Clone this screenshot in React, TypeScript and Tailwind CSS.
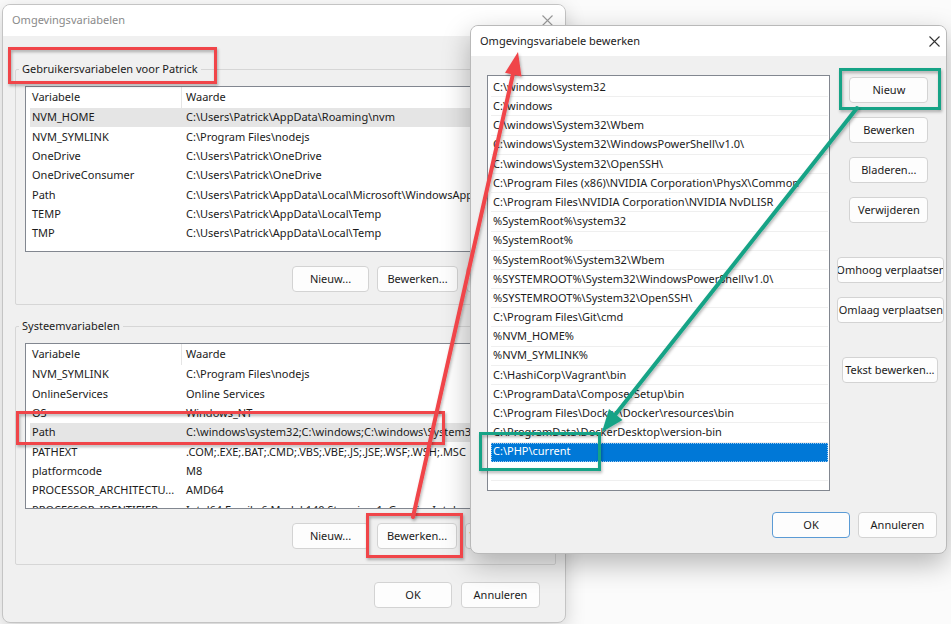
import React from "react";

const userVars: [string, string][] = [
  ["NVM_HOME", "C:\\Users\\Patrick\\AppData\\Roaming\\nvm"],
  ["NVM_SYMLINK", "C:\\Program Files\\nodejs"],
  ["OneDrive", "C:\\Users\\Patrick\\OneDrive"],
  ["OneDriveConsumer", "C:\\Users\\Patrick\\OneDrive"],
  ["Path", "C:\\Users\\Patrick\\AppData\\Local\\Microsoft\\WindowsApps;C:\\Users\\Patrick\\AppData"],
  ["TEMP", "C:\\Users\\Patrick\\AppData\\Local\\Temp"],
  ["TMP", "C:\\Users\\Patrick\\AppData\\Local\\Temp"],
];

const sysVars: [string, string][] = [
  ["NVM_SYMLINK", "C:\\Program Files\\nodejs"],
  ["OnlineServices", "Online Services"],
  ["OS", "Windows_NT"],
  ["Path", "C:\\windows\\system32;C:\\windows;C:\\windows\\System32\\Wbem;C:\\windows"],
  ["PATHEXT", ".COM;.EXE;.BAT;.CMD;.VBS;.VBE;.JS;.JSE;.WSF;.WSH;.MSC"],
  ["platformcode", "M8"],
  ["PROCESSOR_ARCHITECTU...", "AMD64"],
  ["PROCESSOR_IDENTIFIER", "Intel64 Family 6 Model 140 Stepping 1, GenuineIntel"],
];

const paths = [
  "C:\\windows\\system32",
  "C:\\windows",
  "C:\\windows\\System32\\Wbem",
  "C:\\windows\\System32\\WindowsPowerShell\\v1.0\\",
  "C:\\windows\\System32\\OpenSSH\\",
  "C:\\Program Files (x86)\\NVIDIA Corporation\\PhysX\\Common",
  "C:\\Program Files\\NVIDIA Corporation\\NVIDIA NvDLISR",
  "%SystemRoot%\\system32",
  "%SystemRoot%",
  "%SystemRoot%\\System32\\Wbem",
  "%SYSTEMROOT%\\System32\\WindowsPowerShell\\v1.0\\",
  "%SYSTEMROOT%\\System32\\OpenSSH\\",
  "C:\\Program Files\\Git\\cmd",
  "%NVM_HOME%",
  "%NVM_SYMLINK%",
  "C:\\HashiCorp\\Vagrant\\bin",
  "C:\\ProgramData\\ComposerSetup\\bin",
  "C:\\Program Files\\Docker\\Docker\\resources\\bin",
  "C:\\ProgramData\\DockerDesktop\\version-bin",
  "C:\\PHP\\current",
];

function Btn({
  children,
  w,
  def = false,
}: {
  children: React.ReactNode;
  w: string;
  def?: boolean;
}) {
  return (
    <div
      className={`${w} h-[26px] shrink-0 flex items-center justify-center overflow-hidden whitespace-nowrap rounded-[4px] bg-[#fdfdfd] text-[11px] text-[#1b1b1b] border ${
        def ? "border-[#5b9bd5]" : "border-[#d3d3d3]"
      }`}
    >
      {children}
    </div>
  );
}

function CloseX({ color }: { color: string }) {
  return (
    <svg width="11" height="11" viewBox="0 0 11 11">
      <path d="M0.5 0.5 L10.5 10.5 M10.5 0.5 L0.5 10.5" stroke={color} strokeWidth="1.1" />
    </svg>
  );
}

function VarList({
  rows,
  hl,
  h,
}: {
  rows: [string, string][];
  hl: number;
  h: string;
}) {
  return (
    <div className={`w-[520px] ${h} bg-white border border-[#828790] overflow-hidden`}>
      <div className="flex h-[21px] items-center text-[11px] text-[#1b1b1b]">
        <div className="w-[156px] shrink-0 pl-[6px] h-full flex items-center border-r border-[#e5e5e5]">Variabele</div>
        <div className="pl-[4px]">Waarde</div>
      </div>
      {rows.map((r, i) => (
        <div
          key={i}
          className={`flex h-[19.33px] items-center text-[11px] text-[#1b1b1b] whitespace-nowrap ml-[4px] ${
            i === hl ? "bg-[#e5e5e5]" : ""
          }`}
        >
          <div className="w-[152px] shrink-0 pl-[2px] overflow-hidden">{r[0]}</div>
          <div className="pl-[4px]">{r[1]}</div>
        </div>
      ))}
    </div>
  );
}

function Group({
  title,
  children,
}: {
  title: string;
  children: React.ReactNode;
}) {
  return (
    <fieldset className="w-[541px] border border-[#d6d6d6] rounded-[2px] pl-[9px] pr-[9px] m-0">
      <legend className="ml-[-6px] px-[3px] text-[11px] text-[#1b1b1b] leading-[16px]">{title}</legend>
      {children}
    </fieldset>
  );
}

export default function App() {
  return (
    <div className="relative w-[951px] h-[624px] overflow-hidden bg-[#fbfbfb] font-['Noto_Sans',sans-serif]">
      {/* Window 1 */}
      <div className="absolute left-[2px] top-[4px] w-[564px] h-[619px] rounded-[8px] border border-[#c4c4c4] bg-[#f0f0f0] overflow-hidden shadow-[0_6px_20px_rgba(0,0,0,0.18)] flex flex-col">
        <div className="h-[31px] bg-white flex items-center justify-between pl-[9px] pr-[12px]">
          <span className="text-[11px] text-[#8a8a8a]">Omgevingsvariabelen</span>
          <CloseX color="#9a9a9a" />
        </div>
        <div className="pl-[12px] pt-[25px] flex flex-col">
          <Group title="Gebruikersvariabelen voor Patrick">
            <div className="mt-[9px]">
              <VarList rows={userVars} hl={0} h="h-[166px]" />
            </div>
            <div className="flex gap-[8px] mt-[14px] mb-[12px] pl-[267px]">
              <Btn w="w-[77px]">Nieuw...</Btn>
              <Btn w="w-[81px]">Bewerken...</Btn>
              <Btn w="w-[80px]">Verwijderen...</Btn>
            </div>
          </Group>
          <div className="mt-[13px]">
            <Group title="Systeemvariabelen">
              <div className="mt-[9px]">
                <VarList rows={sysVars} hl={3} h="h-[166px]" />
              </div>
              <div className="flex gap-[8px] mt-[14px] mb-[15px] pl-[267px]">
                <Btn w="w-[77px]">Nieuw...</Btn>
                <Btn w="w-[80px]">Bewerken...</Btn>
                <Btn w="w-[80px]">Verwijderen...</Btn>
              </div>
            </Group>
          </div>
          <div className="flex gap-[9px] mt-[17px] pl-[359px]">
            <Btn w="w-[78px]">OK</Btn>
            <Btn w="w-[79px]">Annuleren</Btn>
          </div>
        </div>
      </div>

      {/* Window 2 */}
      <div className="absolute left-[470px] top-[25px] w-[477px] h-[529px] rounded-[8px] border border-[#b9b9b9] bg-[#f0f0f0] overflow-hidden shadow-[0_10px_28px_rgba(0,0,0,0.28)] flex flex-col">
        <div className="h-[30px] bg-white flex items-center justify-between pl-[9px] pr-[6px]">
          <span className="text-[11px] text-[#1b1b1b]">Omgevingsvariabele bewerken</span>
          <CloseX color="#333333" />
        </div>
        <div className="flex pt-[19px] pl-[16px]">
          <div className="w-[345px] h-[416px] bg-white border border-[#828790] pl-[3px] pr-[1px] pt-[2px]">
            {paths.map((p, i) => (
              <div
                key={i}
                className={`h-[19.2px] flex items-center pl-[2px] text-[11px] whitespace-nowrap overflow-hidden border-b ${
                  i === paths.length - 1
                    ? "bg-[#0078d7] text-white border-[#0078d7] outline outline-1 outline-dotted outline-[#9cc8ef] -outline-offset-1"
                    : "text-[#1b1b1b] border-[#efefef]"
                }`}
              >
                {p}
              </div>
            ))}
            <div className="h-[19.2px] border-b border-[#efefef]" />
          </div>
          <div className="w-[115px] ml-[2px] flex flex-col items-center pt-[2px]">
            <div className="flex flex-col gap-[14px] items-center">
              <Btn w="w-[79px]">Nieuw</Btn>
              <Btn w="w-[79px]">Bewerken</Btn>
              <Btn w="w-[79px]">Bladeren...</Btn>
              <Btn w="w-[79px]">Verwijderen</Btn>
            </div>
            <div className="flex flex-col gap-[14px] items-center mt-[34px] pl-[4px]">
              <Btn w="w-[107px]">Omhoog verplaatsen</Btn>
              <Btn w="w-[107px]">Omlaag verplaatsen</Btn>
            </div>
            <div className="mt-[34px] pl-[2px]">
              <Btn w="w-[96px]">Tekst bewerken...</Btn>
            </div>
          </div>
        </div>
        <div className="flex gap-[8px] mt-[21px] pl-[301px]">
          <Btn w="w-[78px]" def>
            OK
          </Btn>
          <Btn w="w-[79px]">Annuleren</Btn>
        </div>
      </div>

      {/* Annotations */}
      <svg className="absolute inset-0 pointer-events-none" width="951" height="624" viewBox="0 0 951 624">
        <defs>
          <filter id="sh" x="-10%" y="-10%" width="130%" height="140%">
            <feDropShadow dx="1" dy="2" stdDeviation="1.5" floodColor="#000" floodOpacity="0.3" />
          </filter>
        </defs>
        <g filter="url(#sh)" fill="none" strokeWidth="3">
          <rect x="9.5" y="48.5" width="206" height="34" stroke="#f0454a" />
          <rect x="17.5" y="412.5" width="426" height="31" stroke="#f0454a" />
          <rect x="367.5" y="514.5" width="94" height="42" stroke="#f0454a" />
          <rect x="840.5" y="69.5" width="99" height="39" stroke="#17a386" />
          <rect x="480.5" y="433.5" width="119" height="36" stroke="#17a386" />
        </g>
        <g filter="url(#sh)">
          <line x1="413" y1="517" x2="513" y2="74" stroke="#f0454a" strokeWidth="4" strokeLinecap="round" />
          <polygon points="518,52 521.5,76.5 505,72.7" fill="#f0454a" />
          <line x1="857" y1="108" x2="615" y2="415" stroke="#17a386" strokeWidth="4" strokeLinecap="round" />
          <polygon points="602,432 622.5,420 609,409" fill="#17a386" />
        </g>
      </svg>
    </div>
  );
}
